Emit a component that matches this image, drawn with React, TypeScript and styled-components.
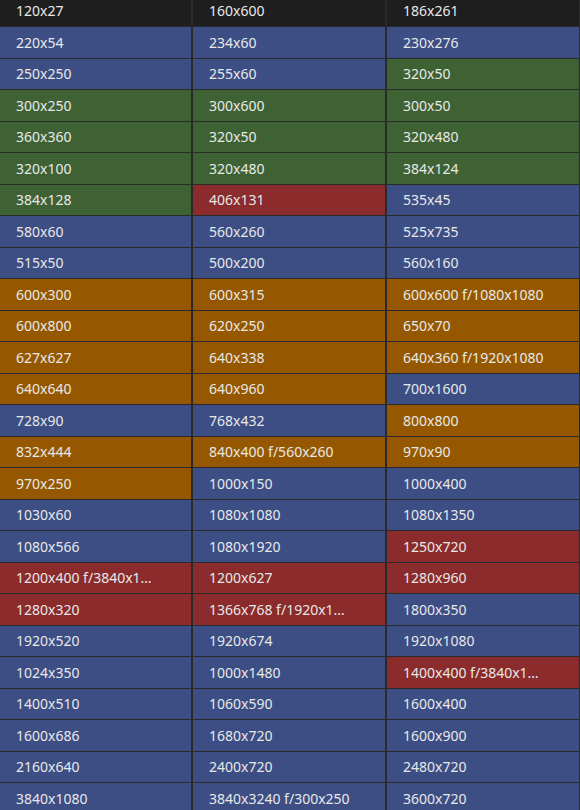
import React from "react";
import styled, { createGlobalStyle } from "styled-components";

type Tone = "d" | "b" | "g" | "r" | "o";

const GlobalStyle = createGlobalStyle`
  html, body { margin: 0; padding: 0; background: #2a2a2a; overflow: hidden; }
  body { font-family: "Noto Sans", "Open Sans", sans-serif; }
`;

const tones: Record<Tone, string> = {
  d: "#1e1e1e",
  b: "#3c4e84",
  g: "#3e6234",
  r: "#8b2b2c",
  o: "#955800",
};

const Grid = styled.div`
  display: grid;
  grid-template-columns: 191px 192px 192px;
  grid-auto-rows: 30.5px;
  column-gap: 2px;
  row-gap: 1px;
  width: 580px;
  margin-top: -4.5px;
  background: #2a2a2a;
`;

const Cell = styled.div<{ $tone: Tone }>`
  display: flex;
  align-items: center;
  padding: 0 16px;
  background: ${(p) => tones[p.$tone]};
  color: #e8e8e8;
  font-size: 14px;
  white-space: nowrap;
  overflow: hidden;
  text-overflow: ellipsis;
  min-width: 0;
`;

const rows: [string, Tone][][] = [
  [["120x27", "d"], ["160x600", "d"], ["186x261", "d"]],
  [["220x54", "b"], ["234x60", "b"], ["230x276", "b"]],
  [["250x250", "b"], ["255x60", "b"], ["320x50", "g"]],
  [["300x250", "g"], ["300x600", "g"], ["300x50", "g"]],
  [["360x360", "g"], ["320x50", "g"], ["320x480", "g"]],
  [["320x100", "g"], ["320x480", "g"], ["384x124", "g"]],
  [["384x128", "g"], ["406x131", "r"], ["535x45", "b"]],
  [["580x60", "b"], ["560x260", "b"], ["525x735", "b"]],
  [["515x50", "b"], ["500x200", "b"], ["560x160", "b"]],
  [["600x300", "o"], ["600x315", "o"], ["600x600 f/1080x1080", "o"]],
  [["600x800", "o"], ["620x250", "o"], ["650x70", "o"]],
  [["627x627", "o"], ["640x338", "o"], ["640x360 f/1920x1080", "o"]],
  [["640x640", "o"], ["640x960", "o"], ["700x1600", "b"]],
  [["728x90", "b"], ["768x432", "b"], ["800x800", "o"]],
  [["832x444", "o"], ["840x400 f/560x260", "o"], ["970x90", "o"]],
  [["970x250", "o"], ["1000x150", "b"], ["1000x400", "b"]],
  [["1030x60", "b"], ["1080x1080", "b"], ["1080x1350", "b"]],
  [["1080x566", "b"], ["1080x1920", "b"], ["1250x720", "r"]],
  [["1200x400 f/3840x1…", "r"], ["1200x627", "r"], ["1280x960", "r"]],
  [["1280x320", "r"], ["1366x768 f/1920x1…", "r"], ["1800x350", "b"]],
  [["1920x520", "b"], ["1920x674", "b"], ["1920x1080", "b"]],
  [["1024x350", "b"], ["1000x1480", "b"], ["1400x400 f/3840x1…", "r"]],
  [["1400x510", "b"], ["1060x590", "b"], ["1600x400", "b"]],
  [["1600x686", "b"], ["1680x720", "b"], ["1600x900", "b"]],
  [["2160x640", "b"], ["2400x720", "b"], ["2480x720", "b"]],
  [["3840x1080", "b"], ["3840x3240 f/300x250", "b"], ["3600x720", "b"]],
];

export default function App() {
  return (
    <>
      <GlobalStyle />
      <Grid>
        {rows.flatMap((row, i) =>
          row.map(([label, tone], j) => (
            <Cell key={`${i}-${j}`} $tone={tone}>
              {label}
            </Cell>
          ))
        )}
      </Grid>
    </>
  );
}
